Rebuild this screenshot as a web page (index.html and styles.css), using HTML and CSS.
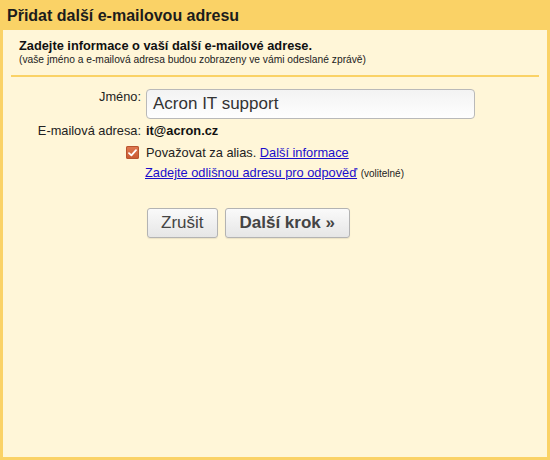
FILE: index.html
```html
<!DOCTYPE html>
<html lang="cs">
<head>
<meta charset="utf-8">
<link rel="stylesheet" href="styles.css">
</head>
<body>
<div class="dialog">
  <div class="title">Přidat další e-mailovou adresu</div>
  <div class="panel">
    <div class="intro">
      <div class="intro-head">Zadejte informace o vaší další e-mailové adrese.</div>
      <div class="intro-sub">(vaše jméno a e-mailová adresa budou zobrazeny ve vámi odeslané zprávě)</div>
    </div>
    <div class="sep"></div>
    <div class="form">
      <div class="row row-name">
        <div class="label label-top">Jméno:</div>
        <div class="value"><div class="input">Acron IT support</div></div>
      </div>
      <div class="row row-email">
        <div class="label">E-mailová adresa:</div>
        <div class="value strong">it@acron.cz</div>
      </div>
      <div class="row row-alias">
        <div class="label"><span class="check"><svg width="9" height="8" viewBox="0 0 9 8"><path d="M1 4.2 L3.4 6.4 L8 1.2" fill="none" stroke="#fff" stroke-width="1.8" stroke-linecap="round" stroke-linejoin="round"/></svg></span></div>
        <div class="value">Považovat za alias. <a class="link" href="#">Další informace</a></div>
      </div>
      <div class="row row-reply">
        <div class="label"></div>
        <div class="value"><a class="link" href="#">Zadejte odlišnou adresu pro odpověď</a> <span class="optional">(volitelné)</span></div>
      </div>
      <div class="row row-buttons">
        <div class="label"></div>
        <div class="buttons">
          <button class="btn">Zrušit</button>
          <button class="btn btn-primary">Další krok »</button>
        </div>
      </div>
    </div>
  </div>
</div>
</body>
</html>
```
FILE: styles.css
```css
html, body {
  margin: 0;
  padding: 0;
}
body {
  background: #fad266;
  font-family: "Liberation Sans", Arial, sans-serif;
  color: #222;
}
.dialog {
  width: 550px;
  height: 460px;
  display: flex;
  flex-direction: column;
  box-sizing: border-box;
}
.title {
  height: 30px;
  box-sizing: border-box;
  padding: 6px 7px 0;
  font-size: 16px;
  font-weight: bold;
  line-height: 20px;
  color: #1c1c1c;
}
.panel {
  flex: 1;
  margin: 0 3px 3px;
  background: #fff6d8;
}
.intro {
  padding: 8px 16px 0;
}
.intro-head {
  font-size: 12.8px;
  font-weight: bold;
  line-height: 15px;
  color: #111;
}
.intro-sub {
  font-size: 10.25px;
  line-height: 13px;
  color: #222;
}
.sep {
  height: 2px;
  margin: 9px 8px 0;
  background: #fad266;
}
.form {
  margin-top: 12px;
  display: flex;
  flex-direction: column;
}
.row {
  display: flex;
  align-items: center;
  font-size: 12.8px;
  line-height: 15px;
}
.label {
  width: 138px;
  flex: none;
  text-align: right;
  margin-right: 5px;
  color: #222;
}
.row-name {
  align-items: flex-start;
}
.row-email {
  margin-top: 4px;
}
.row-alias {
  margin-top: 7px;
}
.row-alias .label {
  margin-right: 7px;
  display: flex;
  justify-content: flex-end;
  padding-right: 1px;
  box-sizing: border-box;
  width: 137px;
}
.row-alias .value {
  margin-left: -1px;
}
.row-reply {
  margin-top: 5px;
}
.row-reply .value {
  margin-left: -1px;
}
.row-buttons {
  margin-top: 27px;
}
.strong {
  font-weight: bold;
  color: #111;
}
.input {
  width: 329px;
  height: 30px;
  box-sizing: border-box;
  border: 1px solid #b9b9b9;
  border-radius: 4px;
  background: linear-gradient(#f3f3f3, #fefefe);
  font-size: 17px;
  line-height: 28px;
  padding: 0 6px;
  color: #333;
}
.check {
  width: 13px;
  height: 13px;
  border-radius: 2px;
  background: linear-gradient(#e07a52, #c8582f);
  box-shadow: inset 0 0 0 1px #b8532e;
  display: flex;
  align-items: center;
  justify-content: center;
}
.check svg {
  display: block;
}
.link {
  color: #1a0dcc;
  text-decoration: underline;
}
.optional {
  font-size: 10px;
  color: #222;
}
.buttons {
  display: flex;
  gap: 7px;
  margin-left: 1px;
}
.btn {
  height: 30px;
  box-sizing: border-box;
  border: 1px solid #b3b3b3;
  border-radius: 3px;
  background: linear-gradient(#fafafa, #e6e6e6);
  box-shadow: 0 1px 1px rgba(0,0,0,0.08);
  font-family: "Liberation Sans", Arial, sans-serif;
  font-size: 17px;
  color: #444;
  padding: 0 13px;
  margin: 0;
}
.btn-primary {
  font-weight: bold;
  padding: 0 14px;
}
```
